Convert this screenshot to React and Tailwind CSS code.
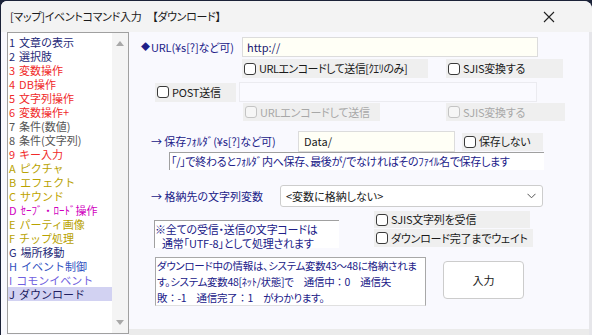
import React from "react";

const F = { fontFamily: '"Noto Sans CJK JP", "Noto Sans", sans-serif', fontFeatureSettings: '"palt"' };

function Box({ disabled }) {
  return (
    <span
      className={
        "inline-block w-[12px] h-[12px] rounded-[3px] border shrink-0 " +
        (disabled ? "border-[#c4c4c4] bg-[#f6f6f6]" : "border-[#3a3a3a] bg-white")
      }
    />
  );
}

function Check({ label, w, h = "h-[18px]", disabled, className = "", tight }) {
  return (
    <div className={`flex items-center bg-[#efefef] ${h} ${w} ${className}`}>
      <span className="ml-[2px] flex items-center">
        <Box disabled={disabled} />
      </span>
      <span
        className={
          "ml-[3px] text-[11px] leading-none whitespace-nowrap " +
          (tight ? "tracking-[-0.5px] " : "tracking-[-0.2px] ") +
          (disabled ? "text-[#a8a8a8]" : "text-[#1a1a1a]")
        }
      >
        {label}
      </span>
    </div>
  );
}

const C = () => <span className="[font-feature-settings:normal]">：</span>;

const items = [
  ["1", "文章の表示", "text-[#1e2a78]"],
  ["2", "選択肢", "text-[#1e2a78]"],
  ["3", "変数操作", "text-[#f02a2a]"],
  ["4", "DB操作", "text-[#f02a2a]"],
  ["5", "文字列操作", "text-[#f02a2a]"],
  ["6", "変数操作+", "text-[#f02a2a]"],
  ["7", "条件(数値)", "text-[#555555]"],
  ["8", "条件(文字列)", "text-[#555555]"],
  ["9", "キー入力", "text-[#f02a2a]"],
  ["A", "ピクチャ", "text-[#b8a200]"],
  ["B", "エフェクト", "text-[#b8a200]"],
  ["C", "サウンド", "text-[#c0a400]"],
  ["D", "ｾｰﾌﾞ・ﾛｰﾄﾞ操作", "text-[#d000c0]"],
  ["E", "パーティ画像", "text-[#b8a200]"],
  ["F", "チップ処理", "text-[#b8a200]"],
  ["G", "場所移動", "text-[#1e2a78]"],
  ["H", "イベント制御", "text-[#3050c0]"],
  ["I", "コモンイベント", "text-[#7060e0]"],
  ["J", "ダウンロード", "text-[#202060]"],
];

export default function App() {
  return (
    <div className="w-[592px] h-[335px] bg-[#1b2238] overflow-hidden" style={F}>
      <div className="w-[591px] h-[334px] ml-[1px] mt-[1px] rounded-tr-[8px] rounded-tl-[6px] bg-[#f9f9fe] flex flex-col overflow-hidden">
        {/* title bar */}
        <div className="h-[31px] bg-[#f3f3f3] flex items-center shrink-0">
          <span className="ml-[9px] text-[11px] tracking-[-0.3px] text-[#1a1a1a] whitespace-nowrap">
            [マップ]イベントコマンド入力　【ダウンロード】
          </span>
          <div className="ml-auto mr-[37px] w-[12px] h-[12px] flex items-center justify-center">
            <svg width="12" height="12" viewBox="0 0 12 12">
              <path d="M1 1 L11 11 M11 1 L1 11" stroke="#222" strokeWidth="1.1" />
            </svg>
          </div>
        </div>
        <div className="flex flex-1 min-h-0">
          {/* list */}
          <div className="ml-[6px] w-[122px] h-[302px] border border-[#a0a0a0] bg-white flex shrink-0">
            <div className="flex-1 pt-[2px] [font-feature-settings:normal]">
              {items.map(([n, t, c], i) => (
                <div
                  key={i}
                  className={
                    "h-[14px] leading-[14px] text-[11px] pl-[1px] whitespace-nowrap overflow-hidden flex " +
                    c +
                    (i === items.length - 1 ? " bg-[#d2d2f2]" : "")
                  }
                >
                  <span>{n}</span>
                  <span className="ml-[4px]">{t}</span>
                </div>
              ))}
            </div>
            <div className="w-[16px] bg-[#f4f4f4] flex flex-col items-center justify-between py-[8px]">
              <svg width="8" height="5" viewBox="0 0 8 5">
                <path d="M0 5 L4 0 L8 5 Z" fill="#a8a8a8" />
              </svg>
              <svg width="8" height="5" viewBox="0 0 8 5">
                <path d="M0 0 L8 0 L4 5 Z" fill="#a8a8a8" />
              </svg>
            </div>
          </div>
          {/* right panel */}
          <div className="flex-1 flex flex-col border-r-[3px] border-[#e6e6ea]">
            <div className="flex-1">
              {/* URL row */}
              <div className="mt-[5px] h-[20px] flex items-center">
                <div className="ml-[12px] w-[101px] text-[11px] tracking-[-0.1px] text-[#202088] whitespace-nowrap flex items-center">
                  <span className="text-[9px] mr-[1px]">◆</span>URL(¥s[?]など可)
                </div>
                <div className="w-[296px] h-[20px] bg-[#fffff6] border border-[#dcdcdc] flex items-center pl-[4px] text-[11px] text-[#202070]">
                  http://
                </div>
              </div>
              {/* encode row */}
              <div className="mt-[2px] h-[19px] flex items-center">
                <Check className="ml-[113px]" w="w-[186px]" h="h-[19px]" tight label="URLエンコードして送信[ｸｴﾘのみ]" />
                <Check className="ml-[18px]" w="w-[117px]" h="h-[19px]" label="SJIS変換する" />
              </div>
              {/* POST row */}
              <div className="mt-[4px] h-[20px] flex items-center">
                <Check className="ml-[26px]" w="w-[81px]" h="h-[19px]" label="POST送信" />
                <div className="ml-[3px] w-[298px] h-[20px] bg-[#fafaff] border border-[#ebebf0]" />
              </div>
              {/* disabled row */}
              <div className="mt-[1px] h-[18px] flex items-center">
                <Check className="ml-[114px]" w="w-[137px]" disabled label="URLエンコードして送信" />
                <Check className="ml-[66px]" w="w-[119px]" disabled label="SJIS変換する" />
              </div>
              {/* folder row */}
              <div className="mt-[10px] h-[21px] flex items-center">
                <div className="ml-[22px] w-[147px] text-[11px] tracking-[-0.1px] text-[#202088] whitespace-nowrap">
                  → 保存ﾌｫﾙﾀﾞ(¥s[?]など可)
                </div>
                <div className="w-[157px] h-[21px] bg-[#fffff6] border border-[#dcdcdc] flex items-center pl-[5px] text-[11px] text-[#1a1a1a]">
                  Data/
                </div>
                <Check className="ml-[7px]" w="w-[81px]" label="保存しない" />
              </div>
              {/* folder info */}
              <div className="ml-[40px] w-[375px] h-[18px] bg-white border-t border-l border-[#a0a0a0] text-[11px] tracking-[-0.3px] leading-[16px] text-[#202088] whitespace-nowrap pl-[1px]">
                「/」で終わるとﾌｫﾙﾀﾞ内へ保存、最後が/でなければそのﾌｧｲﾙ名で保存します
              </div>
              {/* variable row */}
              <div className="mt-[15px] h-[22px] flex items-center">
                <div className="ml-[22px] w-[129px] text-[11px] text-[#202088] whitespace-nowrap">
                  → 格納先の文字列変数
                </div>
                <div className="w-[263px] h-[22px] bg-white border border-[#cdcdcd] rounded-[3px] flex items-center pl-[5px] text-[11px] text-[#1a1a1a]">
                  <span>&lt;変数に格納しない&gt;</span>
                  <svg className="ml-auto mr-[6px]" width="9" height="6" viewBox="0 0 9 6">
                    <path d="M0.5 0.8 L4.5 4.8 L8.5 0.8" stroke="#555" strokeWidth="1" fill="none" />
                  </svg>
                </div>
              </div>
              {/* note + checks */}
              <div className="mt-[4px] h-[37px] flex">
                <div className="ml-[25px] mt-[9px] w-[185px] h-[28px] bg-white border-t border-l border-[#a0a0a0] text-[11px] tracking-[-0.2px] leading-[14px] text-[#202088] whitespace-nowrap pt-[1px]">
                  <div>※全ての受信・送信の文字コードは</div>
                  <div className="pl-[7px]">通常「UTF-8」として処理されます</div>
                </div>
                <div className="ml-[35px] flex flex-col gap-[1px]">
                  <Check w="w-[156px]" h="h-[17px]" label="SJIS文字列を受信" />
                  <Check w="w-[159px]" h="h-[18px]" label="ダウンロード完了までウェイト" />
                </div>
              </div>
              {/* info + button */}
              <div className="mt-[9px] flex items-start">
                <div className="ml-[26px] w-[271px] h-[49px] bg-white border border-[#a8a8a8] border-b-[#e0e0e0] text-[10.5px] tracking-[-0.3px] leading-[16px] text-[#202088] whitespace-nowrap pl-[1px] overflow-hidden">
                  <div>ダウンロード中の情報は、システム変数43～48に格納されま</div>
                  <div>す。システム変数48[ﾈｯﾄ/状態]で　通信中<C />0　通信失</div>
                  <div>敗<C />-1　通信完了<C />1　がわかります。</div>
                </div>
                <div className="ml-[17px] mt-[4px] w-[81px] h-[38px] bg-white border border-[#cccccc] rounded-[4px] flex items-center justify-center text-[11px] text-[#1a1a1a]">
                  入力
                </div>
              </div>
            </div>
            <div className="h-[6px] bg-[#ebebeb] shrink-0" />
          </div>
        </div>
      </div>
    </div>
  );
}
